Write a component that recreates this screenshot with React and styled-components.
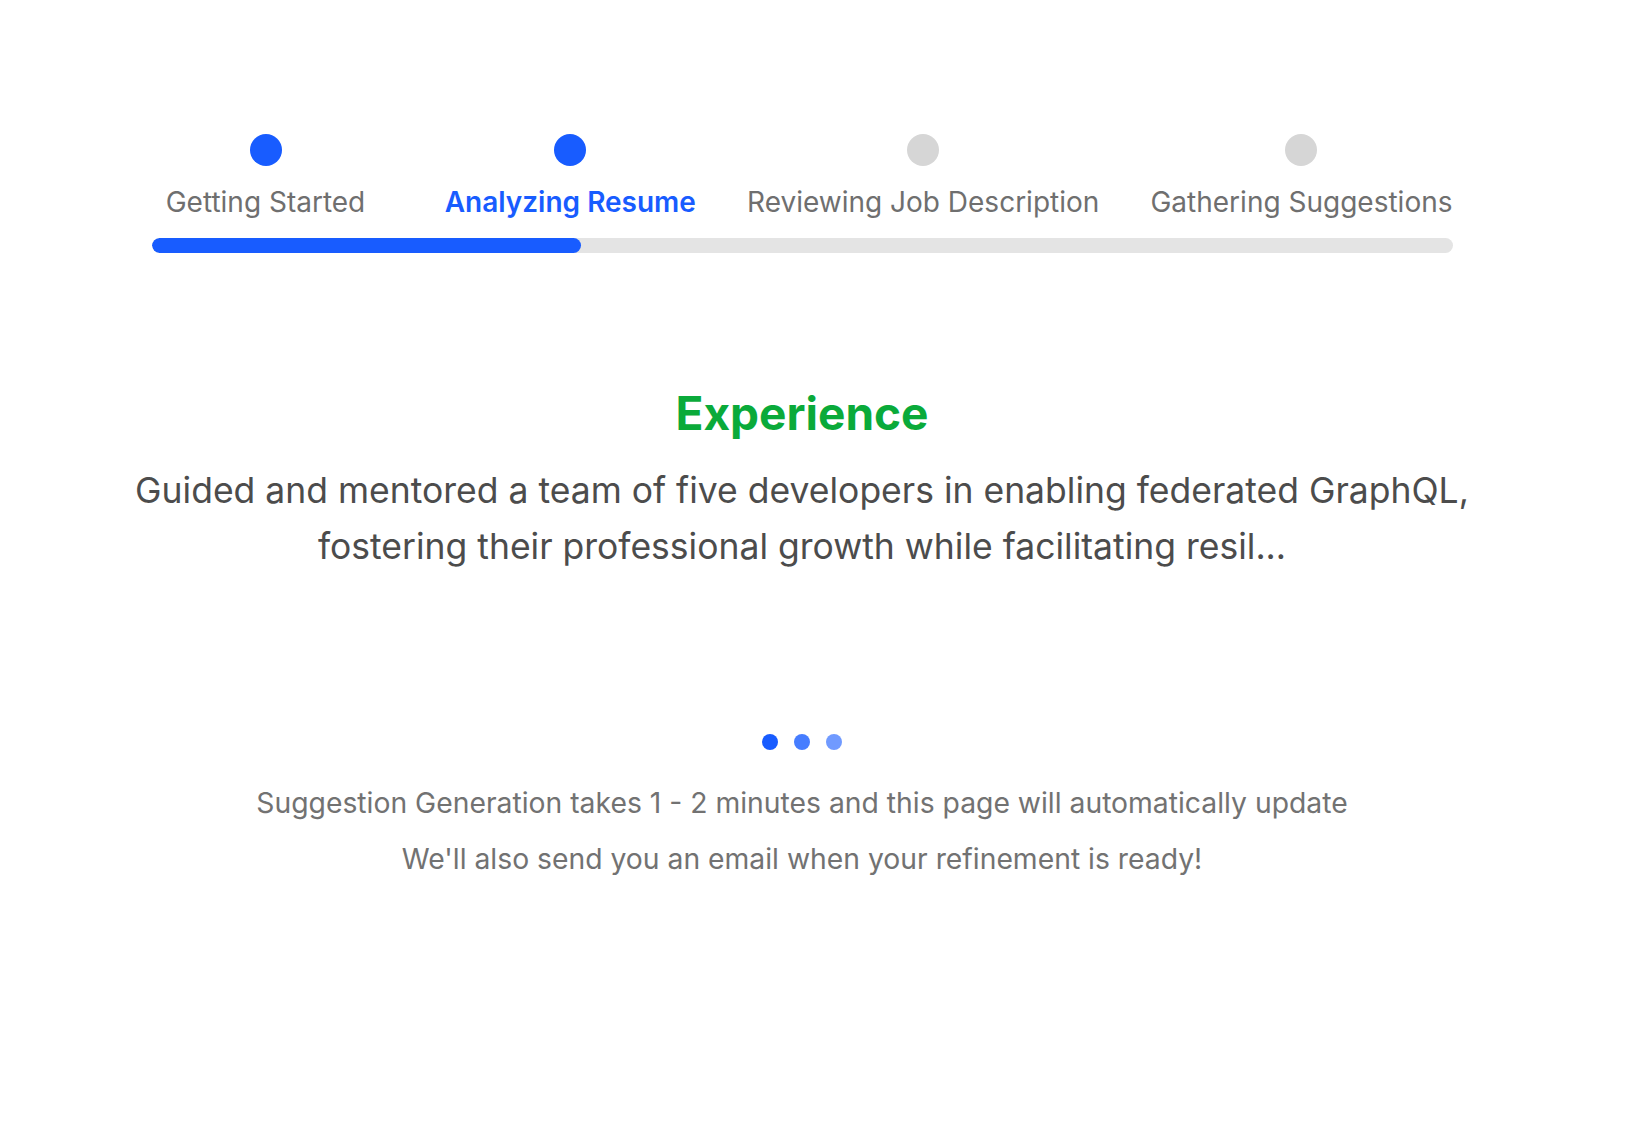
import React from 'react';
import styled, { createGlobalStyle } from 'styled-components';

const GlobalStyle = createGlobalStyle`
  html, body {
    margin: 0;
    padding: 0;
    background: #ffffff;
  }
  body {
    font-family: Inter, "Noto Sans", "Liberation Sans", sans-serif;
    -webkit-font-smoothing: antialiased;
  }
`;

const Page = styled.main`
  min-height: 1136px;
  box-sizing: border-box;
  padding: 134px 38px 0 0;
  display: flex;
  flex-direction: column;
  align-items: center;
`;

const Stepper = styled.div`
  width: 1301px;
  display: flex;
  flex-direction: column;
`;

const StepRow = styled.div`
  display: flex;
  justify-content: space-between;
`;

const Step = styled.div`
  min-width: 228px;
  padding-left: ${({ $active }) => ($active ? '14px' : '0')};
  display: flex;
  flex-direction: column;
  align-items: center;
`;

const StepDot = styled.span`
  width: 32px;
  height: 32px;
  border-radius: 50%;
  background: ${({ $done }) => ($done ? '#185cff' : '#d6d6d6')};
`;

const StepLabel = styled.span`
  margin-top: 19px;
  font-size: 28px;
  line-height: 34px;
  white-space: nowrap;
  font-weight: ${({ $active }) => ($active ? 600 : 400)};
  color: ${({ $active }) => ($active ? '#185cff' : '#6f6f6f')};
`;

const Track = styled.div`
  margin-top: 19px;
  height: 15px;
  border-radius: 8px;
  background: #e4e4e4;
  overflow: hidden;
`;

const Fill = styled.div`
  height: 100%;
  border-radius: 8px;
  background: #185cff;
`;

const Section = styled.section`
  margin-top: 134px;
  display: flex;
  flex-direction: column;
  align-items: center;
  text-align: center;
`;

const Heading = styled.h2`
  margin: 0;
  font-size: 46px;
  line-height: 52px;
  font-weight: 700;
  color: #0aaa3a;
`;

const Excerpt = styled.p`
  margin: 24px 0 0;
  max-width: 1400px;
  font-size: 35.5px;
  line-height: 56px;
  color: #4c4c4c;
`;

const Loader = styled.div`
  margin-top: 159px;
  display: flex;
  gap: 16px;
`;

const LoaderDot = styled.span`
  width: 16px;
  height: 16px;
  border-radius: 50%;
  background: #185cff;
  opacity: ${({ $o }) => $o};
`;

const Note = styled.p`
  margin: ${({ $first }) => ($first ? '32px' : '14px')} 0 0;
  font-size: 28.3px;
  line-height: 42px;
  color: #727272;
`;

const steps = [
  { label: 'Getting Started', done: true },
  { label: 'Analyzing Resume', done: true, active: true },
  { label: 'Reviewing Job Description' },
  { label: 'Gathering Suggestions' },
];

export default function App() {
  const progress = 33;

  return (
    <>
      <GlobalStyle />
      <Page>
        <Stepper>
          <StepRow>
            {steps.map((s) => (
              <Step key={s.label} $active={s.active}>
                <StepDot $done={s.done} />
                <StepLabel $active={s.active}>{s.label}</StepLabel>
              </Step>
            ))}
          </StepRow>
          <Track>
            <Fill style={{ width: `${progress}%` }} />
          </Track>
        </Stepper>

        <Section>
          <Heading>Experience</Heading>
          <Excerpt>
            Guided and mentored a team of five developers in enabling federated GraphQL,
            fostering their professional growth while facilitating resil...
          </Excerpt>

          <Loader>
            <LoaderDot $o={1} />
            <LoaderDot $o={0.8} />
            <LoaderDot $o={0.62} />
          </Loader>

          <Note $first>Suggestion Generation takes 1 - 2 minutes and this page will automatically update</Note>
          <Note>We'll also send you an email when your refinement is ready!</Note>
        </Section>
      </Page>
    </>
  );
}
